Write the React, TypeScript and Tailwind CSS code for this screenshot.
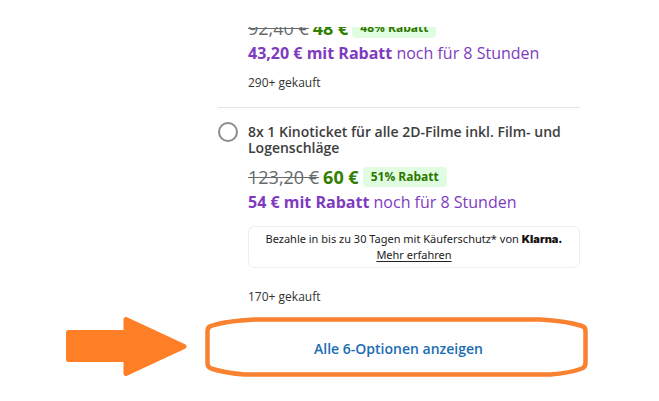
import clsx from "clsx";

type PriceProps = {
  oldPrice: string;
  price: string;
  badge: string;
  promoPrice: string;
};

const Price = ({ oldPrice, price, badge, promoPrice }: PriceProps) => (
  <div>
    <div className="flex h-6 items-center whitespace-nowrap">
      <s className="text-lg leading-6 text-[#666a6d]">{oldPrice}</s>
      <strong className="ml-1 text-lg leading-6 font-bold text-[#328000]">{price}</strong>
      <span className="ml-1 flex h-5 items-center rounded-sm bg-[#e1fde1] px-2 text-xs font-bold text-[#2e7500]">
        {badge}
      </span>
    </div>
    <p className="text-base leading-[26px] whitespace-nowrap text-[#7e3bbf]">
      <strong className="font-bold">{promoPrice} mit Rabatt</strong> noch für 8 Stunden
    </p>
  </div>
);

const Bought = ({ count, className }: { count: string; className?: string }) => (
  <p className={clsx("text-xs leading-5 text-[#333333]", className)}>{count} gekauft</p>
);

const ArrowMark = () => (
  <svg className="h-[60px] w-full" viewBox="0 0 121 60" aria-hidden="true">
    <path
      d="M2.500 15.500H60V2.500L118 29.500L60 56.500V42.500H2.500Z"
      fill="#ff7f27"
      stroke="#ff7f27"
      strokeWidth="5"
      strokeLinejoin="round"
    />
  </svg>
);

export default function App() {
  return (
    <main
      className="grid grid-cols-[121px_1fr] gap-x-[18px] bg-white pt-[27px] pr-[71px] pb-6 pl-[66px]"
      style={{ fontFamily: "'Open Sans', 'Noto Sans', sans-serif" }}
    >
      {/* OPTIONS */}
      <div className="col-start-2 overflow-hidden pr-2 pl-[13px]">
        <section className="-mt-[11px] border-b border-[#e4e4e4] pb-3.5 pl-[30px]">
          <Price oldPrice="92,40 €" price="48 €" badge="48% Rabatt" promoPrice="43,20 €" />
          <Bought count="290+" className="mt-[7px]" />
        </section>

        <section className="grid grid-cols-[20px_1fr] gap-x-2.5 pt-4 pb-2.5">
          <input
            id="option-8"
            type="radio"
            name="option"
            className="-mt-0.5 size-5 appearance-none rounded-full border-2 border-[#8c8c8c] bg-white"
          />
          <div>
            <label htmlFor="option-8" className="block text-sm leading-4 font-semibold text-[#3d3d3d]">
              8x 1 Kinoticket für alle 2D-Filme inkl. Film- und Logenschläge
            </label>
            <div className="mt-[9px]">
              <Price oldPrice="123,20 €" price="60 €" badge="51% Rabatt" promoPrice="54 €" />
            </div>
            <div className="mt-[11px] rounded-md border border-[#eeeeee] py-1 text-center font-[family-name:'Noto_Sans',sans-serif] text-[11px] leading-4 whitespace-nowrap text-[#222222]">
              <p>
                Bezahle in bis zu 30 Tagen mit Käuferschutz* von{" "}
                <span className="font-[family-name:Inter,sans-serif] font-black text-[#17120f]">Klarna.</span>
              </p>
              <a href="#klarna" className="underline underline-offset-2">
                Mehr erfahren
              </a>
            </div>
            <Bought count="170+" className="mt-[19px]" />
          </div>
        </section>
      </div>

      {/* SHOW ALL */}
      <ArrowMark />
      <div className="relative flex h-[60px] items-center justify-center">
        <svg
          className="pointer-events-none absolute inset-0 h-full w-full"
          viewBox="0 0 383 60"
          preserveAspectRatio="none"
          aria-hidden="true"
        >
          <path
            d="M50 2.500H335Q362 4 377 9Q380.500 10 380.500 14V46Q380.500 50 377 51.500Q365 56 345 57.500H40Q20 56 6 51.500Q2.500 50 2.500 46V14Q2.500 10 6 9Q20 4 50 2.500Z"
            fill="none"
            stroke="#f9812f"
            strokeWidth="4.5"
            strokeLinejoin="round"
          />
        </svg>
        <button type="button" className="cursor-pointer pt-1 pl-1 text-sm leading-5 font-semibold text-[#1a6cb3]">
          Alle 6-Optionen anzeigen
        </button>
      </div>
    </main>
  );
}
